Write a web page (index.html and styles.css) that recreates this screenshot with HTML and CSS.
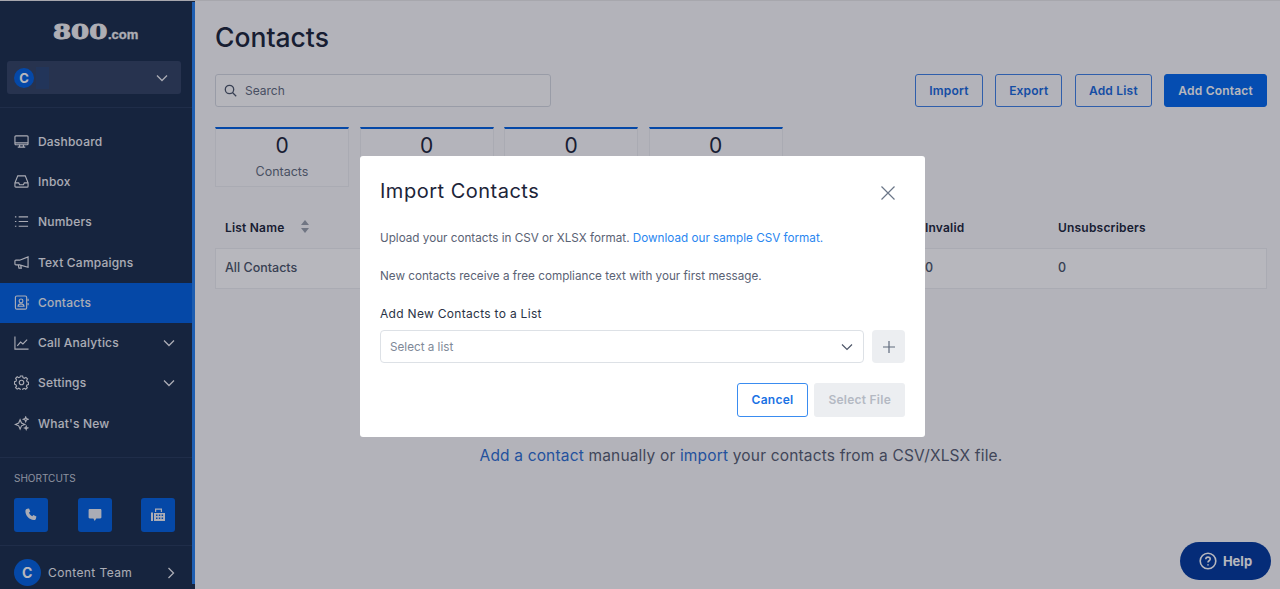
FILE: index.html
```html
<!DOCTYPE html>
<html lang="en">
<head>
  <meta charset="UTF-8" />
  <meta name="viewport" content="width=device-width, initial-scale=1.0"/>
  <title>Contacts</title>
  <link rel="stylesheet" href="styles.css">
</head>
<body>
  <div class="app">
    <!-- Sidebar -->
    <aside class="sidebar">
      <div class="logo"><span class="logo-digits">800</span><span class="logo-com">.com</span></div>
      <div class="account">
        <span class="avatar small">C</span>
        <span class="account-name"></span>
        <svg class="chev" width="12" height="12" viewBox="0 0 12 12"><path d="M1 3.5l5 5 5-5"/></svg>
      </div>
      <nav class="nav">
        <a class="nav-item">
          <svg class="ico" viewBox="0 0 16 16"><rect x="1" y="2" width="14" height="9.5" rx="1"/><path d="M1 9.5h14M4 14h8M6 11.500V14M10 11.500V14"/></svg>
          <span>Dashboard</span>
        </a>
        <a class="nav-item">
          <svg class="ico" viewBox="0 0 16 16"><path d="M4 2h8l3 7.500v3.500a1 1 0 0 1-1 1H2a1 1 0 0 1-1-1V9.500zM1 9.500h4l1 2h4l1-2h4"/></svg>
          <span>Inbox</span>
        </a>
        <a class="nav-item">
          <svg class="ico" viewBox="0 0 16 16"><path d="M5 3h10M5 8h10M5 13h10M1 3h1.500M1 8h1.500M1 13h1.500"/></svg>
          <span>Numbers</span>
        </a>
        <a class="nav-item">
          <svg class="ico" viewBox="0 0 16 16"><path d="M15 2v11L6 10.500H2a1 1 0 0 1-1-1v-3a1 1 0 0 1 1-1h4zM4.500 10.500l.8 3.500h2.500l-.7-3"/></svg>
          <span>Text Campaigns</span>
        </a>
        <a class="nav-item active">
          <svg class="ico" viewBox="0 0 16 16"><rect x="1.500" y="1" width="12" height="14" rx="1.500"/><circle cx="7.500" cy="6.300" r="2"/><path d="M4.300 12c.3-1.800 1.600-2.500 3.200-2.500s2.900.7 3.200 2.500zM15 4v2.500M15 8.500V11"/></svg>
          <span>Contacts</span>
        </a>
        <a class="nav-item">
          <svg class="ico" viewBox="0 0 16 16"><path d="M1 1.500V15h14.500M3.500 11.500L7 7.500l2.500 2L14 5"/></svg>
          <span>Call Analytics</span>
          <svg class="chev" width="12" height="12" viewBox="0 0 12 12"><path d="M1 3.5l5 5 5-5"/></svg>
        </a>
        <a class="nav-item">
          <svg class="ico" viewBox="0 0 16 16"><circle cx="8" cy="8" r="2.400"/><path d="M6.800 1h2.400l.4 1.900 1.400.6 1.700-1 1.700 1.700-1 1.600.6 1.400 1.500.5v2.500l-1.700.4-.6 1.400 1 1.600-1.700 1.600-1.600-1-1.400.6-.4 1.700H6.800l-.4-1.800-1.400-.6-1.600 1-1.700-1.600 1-1.600-.6-1.400L.5 9.600V7.100l1.600-.5.6-1.400-1-1.600 1.700-1.700 1.600 1 1.400-.6z"/></svg>
          <span>Settings</span>
          <svg class="chev" width="12" height="12" viewBox="0 0 12 12"><path d="M1 3.5l5 5 5-5"/></svg>
        </a>
        <a class="nav-item">
          <svg class="ico" viewBox="0 0 16 16"><path d="M6.500 4l1.500 3.500L11.500 9 8 10.500 6.500 14 5 10.500 1.500 9 5 7.500zM12.500 1l.7 1.800 1.800.7-1.800.7-.7 1.800-.7-1.800-1.800-.7 1.800-.7zM13 11l.5 1.200 1.200.5-1.200.5-.5 1.200-.5-1.200-1.200-.5 1.200-.5z"/></svg>
          <span>What's New</span>
        </a>
      </nav>
      <div class="shortcuts">
        <div class="shortcuts-title">SHORTCUTS</div>
        <div class="shortcut-row">
          <a class="shortcut"><svg width="14" height="14" viewBox="0 0 14 14"><path d="M3.200.8l1.800-.4 1.300 3-1.300 1.100c.5 1.600 1.600 2.900 3.200 3.800l1.200-1.200 3 1.400-.5 2.200c-.2.900-1 1.500-1.900 1.400C4.900 11.600 1.400 7.500 1.400 3c0-1 .8-1.900 1.800-2.200z"/></svg></a>
          <a class="shortcut"><svg width="14" height="14" viewBox="0 0 14 14"><path d="M1.800 1h10.400c.7 0 1.200.5 1.200 1.200v7c0 .7-.5 1.200-1.200 1.200H8.300L6.700 13l-1.300-2.600H1.800C1.100 10.400.6 9.900.6 9.200v-7C.6 1.500 1.100 1 1.800 1z"/></svg></a>
          <a class="shortcut"><svg width="14" height="14" viewBox="0 0 14 14"><path fill-rule="evenodd" d="M0 4.500h2V13H0zM3 5h11v8H3zM4 .5h7V4H9.800V1.700H5.200V4H4zM5 6.500V8h1.500V6.500zM7.800 6.500V8h1.500V6.500zM10.600 6.500V8h1.500V6.500zM5 9.500V11h1.500V9.500zM7.800 9.500V11h1.500V9.500zM10.600 9.500V11h1.500V9.500z"/></svg></a>
        </div>
      </div>
      <div class="team">
        <span class="avatar">C</span>
        <span class="team-name">Content Team</span>
        <svg class="chev" width="12" height="12" viewBox="0 0 12 12"><path d="M3.500 1l5 5-5 5"/></svg>
      </div>
      <div class="scroll-thumb"></div>
    </aside>

    <!-- Main -->
    <main class="main">
      <h1 class="title">Contacts</h1>
      <div class="toolbar">
        <div class="search">
          <svg width="13" height="13" viewBox="0 0 13 13"><circle cx="5.500" cy="5.500" r="4.200"/><path d="M8.700 8.700l3.500 3.500"/></svg>
          <span>Search</span>
        </div>
        <div class="actions">
          <a class="btn">Import</a>
          <a class="btn">Export</a>
          <a class="btn">Add List</a>
          <a class="btn primary">Add Contact</a>
        </div>
      </div>
      <div class="stats">
        <div class="stat"><b>0</b><span>Contacts</span></div>
        <div class="stat"><b>0</b></div>
        <div class="stat"><b>0</b></div>
        <div class="stat"><b>0</b></div>
      </div>
      <div class="table-head">
        <div class="sort-col">List Name
          <svg width="10" height="13" viewBox="0 0 10 13"><path d="M5 0l4 5H1zM5 13L1 8h8z"/></svg>
        </div>
        <div>Invalid</div>
        <div>Unsubscribers</div>
      </div>
      <div class="table-row">
        <div>All Contacts</div>
        <div>0</div>
        <div>0</div>
      </div>
      <p class="empty"><a>Add a contact</a> manually or <a>import</a> your contacts from a CSV/XLSX file.</p>
    </main>

    <a class="help">
      <svg width="18" height="18" viewBox="0 0 18 18"><circle cx="9" cy="9" r="7.800"/><path d="M6.800 7.200c0-1.300 1-2.100 2.200-2.100s2.200.8 2.200 2c0 1.700-2.200 1.600-2.200 3.300"/><path d="M9 12.300v1.200"/></svg>
      Help
    </a>
  </div>

  <div class="backdrop"></div>

  <!-- Import modal -->
  <div class="modal">
    <div class="modal-head">
      <h2>Import Contacts</h2>
      <svg class="close" width="14" height="14" viewBox="0 0 14 14"><path d="M.5.5l13 13M13.500.5l-13 13"/></svg>
    </div>
    <p class="modal-text">Upload your contacts in CSV or XLSX format. <a>Download our sample CSV format.</a></p>
    <p class="modal-text">New contacts receive a free compliance text with your first message.</p>
    <label class="modal-label">Add New Contacts to a List</label>
    <div class="select-row">
      <div class="select">
        <span>Select a list</span>
        <svg width="12" height="12" viewBox="0 0 12 12"><path d="M1 3.500l5 5 5-5"/></svg>
      </div>
      <div class="add-btn"><svg width="12" height="12" viewBox="0 0 12 12"><path d="M6 0v12M0 6h12"/></svg></div>
    </div>
    <div class="modal-actions">
      <a class="modal-btn cancel">Cancel</a>
      <a class="modal-btn disabled">Select File</a>
    </div>
  </div>
</body>
</html>
```

FILE: styles.css
```css
* {
  box-sizing: border-box;
}

html, body {
  margin: 0;
  height: 100%;
  overflow: hidden;
}

body {
  font-family: 'Inter', 'Liberation Sans', sans-serif;
  color: #1a2438;
  background: #f9fafb;
}

a {
  text-decoration: none;
  color: inherit;
}

.app {
  display: flex;
  height: 589px;
  border-top: 1px solid #e8e8e8;
}

/* Sidebar */
.sidebar {
  width: 195px;
  flex-shrink: 0;
  display: flex;
  flex-direction: column;
  position: relative;
  background: #192d4a;
  color: #eef0f4;
}

.logo {
  height: 60px;
  padding: 21px 0 0 53px;
  color: #f2f2f2;
  display: flex;
  align-items: baseline;
  line-height: 20px;
}

.logo-digits {
  display: inline-block;
  width: 55px;
  font-family: 'DejaVu Serif', serif;
  font-weight: 700;
  font-size: 20px;
  -webkit-text-stroke: 0.9px #f2f2f2;
  transform: scaleX(1.3);
  transform-origin: left;
}

.logo-com {
  font-family: 'Liberation Sans', sans-serif;
  font-weight: 700;
  font-size: 13px;
  -webkit-text-stroke: 0.3px #f2f2f2;
}

.account {
  margin: 0 14px 0 7px;
  height: 33px;
  padding: 0 13px 0 7px;
  display: flex;
  align-items: center;
  background: #314262;
  border-radius: 3px;
}

.account .chev {
  margin-left: auto;
}

.account-name {
  width: 13px;
  height: 22px;
  margin-left: 2px;
  background: #2a4572;
}

.avatar {
  width: 27px;
  height: 27px;
  border-radius: 50%;
  background: #0061e0;
  color: #fff;
  font-weight: 700;
  font-size: 14px;
  display: flex;
  align-items: center;
  justify-content: center;
  flex-shrink: 0;
}

.avatar.small {
  width: 20px;
  height: 20px;
  font-size: 13px;
}

.chev {
  fill: none;
  stroke: #eef0f4;
  stroke-width: 1.3;
}

.nav {
  margin-top: 13px;
  padding: 14px 0;
  border-top: 1px solid #263a5a;
  border-bottom: 1px solid #263a5a;
  height: 351px;
}

.nav-item {
  height: 40.3px;
  padding: 0 20px 2px 14px;
  display: flex;
  align-items: center;
  gap: 9px;
  font-size: 12px;
  font-weight: 500;
  letter-spacing: 0.2px;
}

.nav-item .chev {
  margin-left: auto;
}

.nav-item.active {
  background: #0061e0;
}

.ico {
  width: 15px;
  height: 15px;
  fill: none;
  stroke: #eef0f4;
  stroke-width: 1.2;
  flex-shrink: 0;
}

.shortcuts {
  height: 88px;
  padding: 14px 14px 0;
  border-bottom: 1px solid #263a5a;
}

.shortcuts-title {
  font-size: 10px;
  line-height: 13px;
  color: #c3c9d4;
}

.shortcut-row {
  margin-top: 13px;
  margin-right: 6px;
  display: flex;
  justify-content: space-between;
}

.shortcut {
  width: 34px;
  height: 34px;
  border-radius: 3px;
  background: #0061e0;
  display: flex;
  align-items: center;
  justify-content: center;
}

.shortcut svg {
  fill: #eef0f4;
}

.team {
  padding: 13px 18px 0 14px;
  display: flex;
  align-items: center;
  gap: 7px;
  font-size: 12px;
  letter-spacing: 0.4px;
}

.team .chev {
  margin-left: auto;
}

.scroll-thumb {
  position: absolute;
  top: 1px;
  bottom: 5px;
  right: 0;
  width: 3px;
  background: #2480ee;
}

/* Main */
.main {
  flex: 1;
  padding: 0 13px 0 20px;
}

.title {
  margin: 19px 0 0;
  font-size: 26.5px;
  line-height: 34px;
  font-weight: 500;
}

.toolbar {
  margin-top: 20px;
  display: flex;
  justify-content: space-between;
}

.search {
  width: 336px;
  height: 33px;
  padding: 0 8px;
  display: flex;
  align-items: center;
  gap: 8px;
  border: 1px solid #d5d9e0;
  border-radius: 3px;
  background: #fdfdfd;
  font-size: 12px;
  color: #5f6a7c;
}

.search svg {
  fill: none;
  stroke: #4a5568;
  stroke-width: 1.3;
}

.actions {
  display: flex;
  gap: 12.5px;
}

.btn {
  height: 33px;
  padding: 0 13px;
  display: flex;
  align-items: center;
  border: 1px solid #3d80e6;
  border-radius: 3px;
  color: #1668dc;
  font-size: 12px;
  font-weight: 600;
  letter-spacing: 0.2px;
}

.btn.primary {
  background: #0068ee;
  border-color: #0068ee;
  color: #fff;
}

.stats {
  margin-top: 20px;
  display: flex;
  gap: 10.5px;
}

.stat {
  width: 134px;
  height: 60px;
  padding-top: 4px;
  display: flex;
  flex-direction: column;
  align-items: center;
  border: 1px solid #eceef1;
  border-top: 2px solid #0061e0;
  background: #fbfbfc;
}

.stat b {
  font-size: 21px;
  line-height: 26px;
  font-weight: 400;
}

.stat span {
  margin-top: 5px;
  font-size: 12.5px;
  color: #626c7d;
}

.table-head,
.table-row {
  display: grid;
  grid-template-columns: 700px 133px 1fr;
  padding-left: 10px;
}

.table-head {
  margin-top: 33px;
  height: 28px;
  font-size: 12px;
  font-weight: 600;
  letter-spacing: 0.2px;
}

.sort-col {
  display: flex;
  gap: 16px;
}

.sort-col svg {
  fill: #9aa1ad;
}

.table-row {
  height: 41px;
  padding: 0 0 2px 9px;
  align-items: center;
  border: 1px solid #eceef1;
  background: #fff;
  color: #4a5568;
  font-size: 12.5px;
  font-weight: 500;
}

.empty {
  margin: 157px 0 0;
  text-align: center;
  font-size: 15.5px;
  line-height: 20px;
  color: #565d70;
  letter-spacing: 0.17px;
}

.empty a {
  color: #2c6ed2;
}

.help {
  position: absolute;
  right: 9px;
  bottom: 9px;
  width: 91px;
  height: 38px;
  border-radius: 19px;
  display: flex;
  align-items: center;
  justify-content: center;
  gap: 6px;
  background: #00399d;
  color: #fff;
  font-size: 13px;
  font-weight: 700;
}

.help svg {
  fill: none;
  stroke: #fff;
  stroke-width: 1.6;
}

/* Modal */
.backdrop {
  position: fixed;
  inset: 0;
  background: rgba(16, 16, 38, 0.3);
}

.modal {
  position: fixed;
  left: 360px;
  top: 156px;
  width: 565px;
  height: 281px;
  padding: 0 20px;
  background: #fff;
  border-radius: 3px;
}

.modal-head {
  height: 74px;
  padding-top: 22px;
  display: flex;
  justify-content: space-between;
}

.modal-head h2 {
  margin: 0;
  font-size: 20px;
  line-height: 26px;
  font-weight: 400;
  letter-spacing: 0.5px;
  color: #1c2438;
}

.close {
  margin: 8px 10px 0 0;
  fill: none;
  stroke: #6b7688;
  stroke-width: 1.2;
}

.modal-text {
  margin: 0 0 22px;
  font-size: 11.7px;
  line-height: 16px;
  color: #5a6274;
}

.modal-text a {
  color: #2a86f0;
}

.modal-label {
  display: block;
  font-size: 12px;
  line-height: 16px;
  font-weight: 400;
  letter-spacing: 0.3px;
  color: #2a3346;
}

.select-row {
  margin-top: 8px;
  display: flex;
  gap: 8px;
}

.select {
  flex: 1;
  height: 33px;
  padding: 0 10px 0 9px;
  display: flex;
  align-items: center;
  justify-content: space-between;
  border: 1px solid #dde1e6;
  border-radius: 4px;
  font-size: 11.7px;
  color: #808998;
}

.select svg {
  fill: none;
  stroke: #4e5668;
  stroke-width: 1.2;
}

.add-btn {
  width: 33px;
  height: 33px;
  display: flex;
  align-items: center;
  justify-content: center;
  border-radius: 4px;
  background: #eceef1;
}

.add-btn svg {
  fill: none;
  stroke: #5f6a7c;
  stroke-width: 1.2;
}

.modal-actions {
  margin-top: 20px;
  display: flex;
  justify-content: flex-end;
  gap: 6px;
}

.modal-btn {
  height: 34px;
  padding: 0 14px 1px;
  display: flex;
  align-items: center;
  border-radius: 3px;
  font-size: 12px;
  font-weight: 600;
  letter-spacing: 0.25px;
}

.modal-btn.cancel {
  border: 1px solid #3a8cf0;
  color: #1a72e4;
}

.modal-btn.disabled {
  background: #eceef1;
  color: #b4b9c3;
}
```
